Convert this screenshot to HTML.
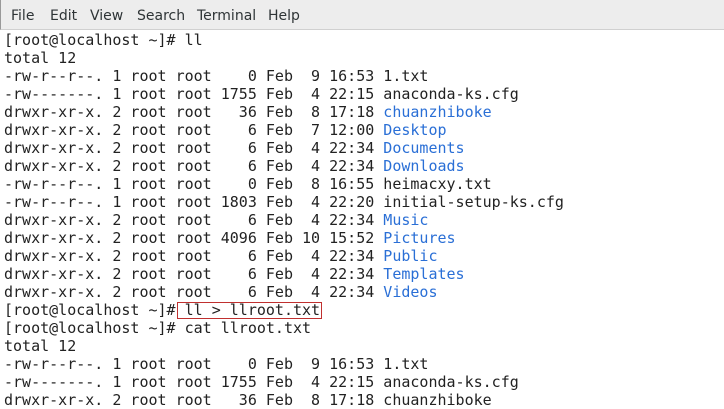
<!DOCTYPE html>
<html><head><meta charset="utf-8"><style>
html,body{margin:0;padding:0;width:724px;height:407px;overflow:hidden;background:#fff}
.menu{position:absolute;left:0;top:0;width:724px;height:30px;background:#ededed;border-bottom:1px solid #d0d0d0;border-left:1px solid #999;box-sizing:border-box;font-family:"DejaVu Sans","Liberation Sans",sans-serif;font-size:14px;color:#2e3436}
.menu span{position:absolute;top:8px}
pre{position:absolute;left:4px;top:31px;margin:0;font-family:"DejaVu Sans Mono","Liberation Mono",monospace;font-size:15px;line-height:18px;color:#222}
.b{color:#2a6fd6}
.box{position:absolute;left:177px;top:302px;width:145px;height:17px;border:1px solid #c0302f;box-sizing:border-box}
</style></head><body>
<div class="menu"><span style="left:10px">File</span><span style="left:49px">Edit</span><span style="left:89px">View</span><span style="left:136px">Search</span><span style="left:196px">Terminal</span><span style="left:267px">Help</span></div>
<pre>[root@localhost ~]# ll
total 12
-rw-r--r--. 1 root root    0 Feb  9 16:53 1.txt
-rw-------. 1 root root 1755 Feb  4 22:15 anaconda-ks.cfg
drwxr-xr-x. 2 root root   36 Feb  8 17:18 <span class="b">chuanzhiboke</span>
drwxr-xr-x. 2 root root    6 Feb  7 12:00 <span class="b">Desktop</span>
drwxr-xr-x. 2 root root    6 Feb  4 22:34 <span class="b">Documents</span>
drwxr-xr-x. 2 root root    6 Feb  4 22:34 <span class="b">Downloads</span>
-rw-r--r--. 1 root root    0 Feb  8 16:55 heimacxy.txt
-rw-r--r--. 1 root root 1803 Feb  4 22:20 initial-setup-ks.cfg
drwxr-xr-x. 2 root root    6 Feb  4 22:34 <span class="b">Music</span>
drwxr-xr-x. 2 root root 4096 Feb 10 15:52 <span class="b">Pictures</span>
drwxr-xr-x. 2 root root    6 Feb  4 22:34 <span class="b">Public</span>
drwxr-xr-x. 2 root root    6 Feb  4 22:34 <span class="b">Templates</span>
drwxr-xr-x. 2 root root    6 Feb  4 22:34 <span class="b">Videos</span>
[root@localhost ~]# ll &gt; llroot.txt
[root@localhost ~]# cat llroot.txt
total 12
-rw-r--r--. 1 root root    0 Feb  9 16:53 1.txt
-rw-------. 1 root root 1755 Feb  4 22:15 anaconda-ks.cfg
drwxr-xr-x. 2 root root   36 Feb  8 17:18 chuanzhiboke</pre>
<div class="box"></div>
</body></html>
